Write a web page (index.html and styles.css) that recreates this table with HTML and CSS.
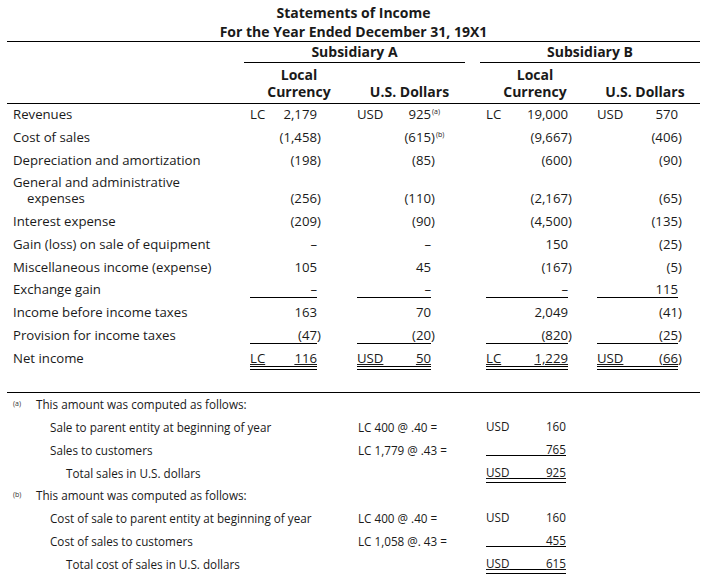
FILE: index.html
```html
<!DOCTYPE html>
<html lang="en">
<head>
<meta charset="utf-8">
<title>Statements of Income</title>
<link rel="stylesheet" href="styles.css">
</head>
<body>
<div class="page">
  <div class="title">
    <div>Statements of Income</div>
    <div>For the Year Ended December 31, 19X1</div>
  </div>

  <div class="heads">
    <div class="grid group-row">
      <div class="group ga">Subsidiary A</div>
      <div class="group gb">Subsidiary B</div>
    </div>
    <div class="grid sub-row">
      <div class="sub c2">Local<br>Currency</div>
      <div class="sub c3">U.S. Dollars</div>
      <div class="sub c5">Local<br>Currency</div>
      <div class="sub c6">U.S. Dollars</div>
    </div>
  </div>

  <div class="body">
    <div class="grid row">
      <div class="label">Revenues</div>
      <div class="v a1"><span>LC</span><span>2,179</span></div>
      <div class="v a2"><span>USD</span><span>925<span class="hang"><sup>(a)</sup></span></span></div>
      <div class="v b1"><span>LC</span><span>19,000</span></div>
      <div class="v b2"><span>USD</span><span>570</span></div>
    </div>
    <div class="grid row">
      <div class="label">Cost of sales</div>
      <div class="v a1"><span></span><span>(1,458<span class="hang">)</span></span></div>
      <div class="v a2"><span></span><span>(615<span class="hang">)<sup>(b)</sup></span></span></div>
      <div class="v b1"><span></span><span>(9,667<span class="hang">)</span></span></div>
      <div class="v b2"><span></span><span>(406<span class="hang">)</span></span></div>
    </div>
    <div class="grid row">
      <div class="label">Depreciation and amortization</div>
      <div class="v a1"><span></span><span>(198<span class="hang">)</span></span></div>
      <div class="v a2"><span></span><span>(85<span class="hang">)</span></span></div>
      <div class="v b1"><span></span><span>(600<span class="hang">)</span></span></div>
      <div class="v b2"><span></span><span>(90<span class="hang">)</span></span></div>
    </div>
    <div class="grid row">
      <div class="label wrap">General and administrative<br>expenses</div>
      <div class="v a1"><span></span><span>(256<span class="hang">)</span></span></div>
      <div class="v a2"><span></span><span>(110<span class="hang">)</span></span></div>
      <div class="v b1"><span></span><span>(2,167<span class="hang">)</span></span></div>
      <div class="v b2"><span></span><span>(65<span class="hang">)</span></span></div>
    </div>
    <div class="grid row">
      <div class="label">Interest expense</div>
      <div class="v a1"><span></span><span>(209<span class="hang">)</span></span></div>
      <div class="v a2"><span></span><span>(90<span class="hang">)</span></span></div>
      <div class="v b1"><span></span><span>(4,500<span class="hang">)</span></span></div>
      <div class="v b2"><span></span><span>(135<span class="hang">)</span></span></div>
    </div>
    <div class="grid row">
      <div class="label">Gain (loss) on sale of equipment</div>
      <div class="v a1"><span></span><span>–</span></div>
      <div class="v a2"><span></span><span>–</span></div>
      <div class="v b1"><span></span><span>150</span></div>
      <div class="v b2"><span></span><span>(25<span class="hang">)</span></span></div>
    </div>
    <div class="grid row">
      <div class="label">Miscellaneous income (expense)</div>
      <div class="v a1"><span></span><span>105</span></div>
      <div class="v a2"><span></span><span>45</span></div>
      <div class="v b1"><span></span><span>(167<span class="hang">)</span></span></div>
      <div class="v b2"><span></span><span>(5<span class="hang">)</span></span></div>
    </div>
    <div class="grid row">
      <div class="label">Exchange gain</div>
      <div class="v a1 line"><span></span><span>–</span></div>
      <div class="v a2 line"><span></span><span>–</span></div>
      <div class="v b1 line"><span></span><span>–</span></div>
      <div class="v b2 line"><span></span><span>115</span></div>
    </div>
    <div class="grid row">
      <div class="label">Income before income taxes</div>
      <div class="v a1"><span></span><span>163</span></div>
      <div class="v a2"><span></span><span>70</span></div>
      <div class="v b1"><span></span><span>2,049</span></div>
      <div class="v b2"><span></span><span>(41<span class="hang">)</span></span></div>
    </div>
    <div class="grid row">
      <div class="label">Provision for income taxes</div>
      <div class="v a1 line"><span></span><span>(47<span class="hang">)</span></span></div>
      <div class="v a2 line"><span></span><span>(20<span class="hang">)</span></span></div>
      <div class="v b1 line"><span></span><span>(820<span class="hang">)</span></span></div>
      <div class="v b2 line"><span></span><span>(25<span class="hang">)</span></span></div>
    </div>
    <div class="grid row">
      <div class="label">Net income</div>
      <div class="v a1 dbl"><span>LC</span><span>116</span></div>
      <div class="v a2 dbl"><span>USD</span><span>50</span></div>
      <div class="v b1 dbl"><span>LC</span><span>1,229</span></div>
      <div class="v b2 dbl"><span>USD</span><span>(66<span class="hang">)</span></span></div>
    </div>
  </div>

  <div class="notes">
    <div class="note">
      <div class="mark">(a)</div>
      <div class="ntext">This amount was computed as follows:</div>
      <div class="calc"></div>
      <div class="nv"><span></span><span></span></div>
    </div>
    <div class="note">
      <div class="mark"></div>
      <div class="ntext lvl1">Sale to parent entity at beginning of year</div>
      <div class="calc">LC 400 @ .40 =</div>
      <div class="nv"><span>USD</span><span>160</span></div>
    </div>
    <div class="note">
      <div class="mark"></div>
      <div class="ntext lvl1">Sales to customers</div>
      <div class="calc">LC 1,779 @ .43 =</div>
      <div class="nv line"><span></span><span>765</span></div>
    </div>
    <div class="note">
      <div class="mark"></div>
      <div class="ntext lvl2">Total sales in U.S. dollars</div>
      <div class="calc"></div>
      <div class="nv dbl"><span>USD</span><span>925</span></div>
    </div>
    <div class="note">
      <div class="mark">(b)</div>
      <div class="ntext">This amount was computed as follows:</div>
      <div class="calc"></div>
      <div class="nv"><span></span><span></span></div>
    </div>
    <div class="note">
      <div class="mark"></div>
      <div class="ntext lvl1">Cost of sale to parent entity at beginning of year</div>
      <div class="calc">LC 400 @ .40 =</div>
      <div class="nv"><span>USD</span><span>160</span></div>
    </div>
    <div class="note">
      <div class="mark"></div>
      <div class="ntext lvl1">Cost of sales to customers</div>
      <div class="calc">LC 1,058 @. 43 =</div>
      <div class="nv line"><span></span><span>455</span></div>
    </div>
    <div class="note">
      <div class="mark"></div>
      <div class="ntext lvl2">Total cost of sales in U.S. dollars</div>
      <div class="calc"></div>
      <div class="nv dbl"><span>USD</span><span>615</span></div>
    </div>
  </div>
</div>
</body>
</html>
```

FILE: styles.css
```css
html, body {
  margin: 0;
  padding: 0;
  background: #ffffff;
}

body {
  color: #1a1a1a;
  font-family: "Open Sans", "Noto Sans", sans-serif;
  font-size: 13.2px;
}

.page {
  width: 693px;
  padding: 0 3px 0 7px;
}

.title {
  text-align: center;
  font-weight: 700;
  font-size: 14px;
  line-height: 19px;
  padding-top: 3px;
  border-bottom: 1px solid #000;
}

.grid {
  display: grid;
  grid-template-columns: 237px 110px 111px 15px 110px 110px;
}

.heads {
  border-bottom: 1px solid #000;
  font-weight: 700;
  font-size: 14px;
}

.group-row {
  line-height: 20px;
}

.group {
  text-align: center;
  border-bottom: 1px solid #000;
}

.ga {
  grid-column: 2 / 4;
}

.gb {
  grid-column: 5 / 7;
}

.sub-row {
  padding: 3px 0 2.5px;
  line-height: 17px;
  align-items: end;
}

.sub {
  text-align: center;
}

.c2 { grid-column: 2; }
.c3 { grid-column: 3; }
.c5 { grid-column: 5; }
.c6 { grid-column: 6; }

.row {
  padding: 3.5px 0 3.25px;
  line-height: 15px;
  align-items: end;
}

.label {
  padding-left: 6px;
  white-space: nowrap;
  border-bottom: 1px solid transparent;
}

.label.wrap {
  padding-left: 20px;
  text-indent: -14px;
  line-height: 15.5px;
}

.v {
  display: flex;
  justify-content: space-between;
  border-bottom: 1px solid transparent;
  white-space: nowrap;
}

.v.a1 { grid-column: 2; margin: 0 37px 0 6px; }
.v.a2 { grid-column: 3; margin: 0 34px 0 3px; }
.v.b1 { grid-column: 5; margin: 0 22px 0 6px; }
.v.b2 { grid-column: 6; margin: 0 22px 0 7px; }

.hang {
  display: inline-block;
  width: 0;
  white-space: nowrap;
}

sup {
  font-size: 7px;
  line-height: 0;
  vertical-align: 5px;
  padding-left: 1px;
}

.notes {
  margin-top: 22px;
  border-top: 1px solid #000;
  font-size: 11.7px;
}

.note {
  display: grid;
  grid-template-columns: 29px 322px 128px 80px;
  padding: 5px 0 5px;
  line-height: 12px;
  align-items: end;
}

.mark {
  padding-left: 6px;
  font-size: 7px;
  align-self: start;
  color: #333;
}

.ntext.lvl1 { padding-left: 14px; }
.ntext.lvl2 { padding-left: 30px; }

.nv {
  display: flex;
  justify-content: space-between;
  border-bottom: 1px solid transparent;
}

.v.line,
.nv.line {
  border-bottom-color: #000;
}

.v.dbl,
.nv.dbl {
  position: relative;
  border-bottom-color: #000;
}

.v.dbl::after,
.nv.dbl::after {
  content: "";
  position: absolute;
  left: 0;
  right: 0;
  bottom: -4px;
  border-bottom: 1px solid #000;
}

.nv.dbl::after {
  bottom: -5px;
}

.row .dbl > span,
.nv.dbl > span {
  text-decoration: underline;
  text-underline-offset: 1px;
}
```
